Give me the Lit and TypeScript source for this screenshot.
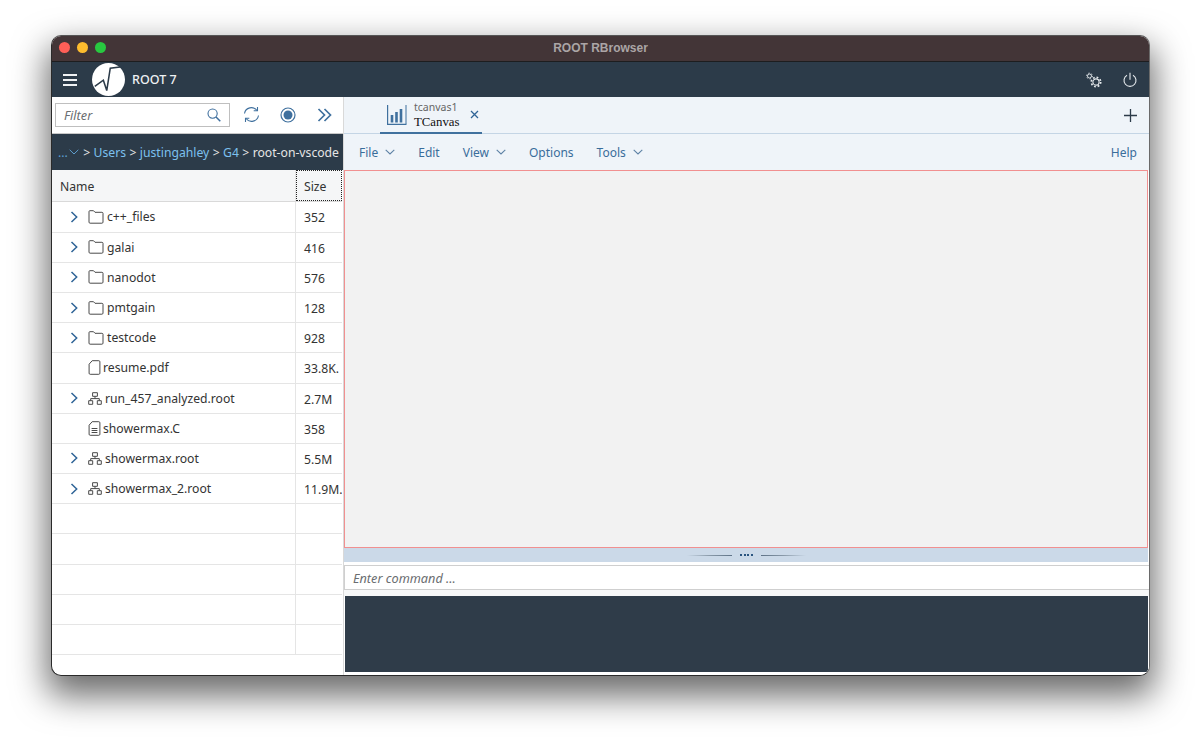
import { LitElement, html, css } from "lit";
import { customElement } from "lit/decorators.js";

const chevR = html`<svg class="chev" viewBox="0 0 10 14" width="10" height="14"><path d="M2.500 2l5.200 5-5.200 5" fill="none" stroke="#2f6497" stroke-width="1.500"/></svg>`;
const chevD = html`<svg class="chevd" viewBox="0 0 10 6" width="10" height="6"><path d="M.7.8l4.300 4.200L9.300.8" fill="none" stroke="#5f83a6" stroke-width="1.100"/></svg>`;
const folder = html`<svg class="ic" viewBox="0 0 16 14" width="16" height="14"><path d="M1 3V1.600C1 1 1.300.7 1.900.7h3.600L7 2.300h6.900c.7 0 1.100.4 1.100 1v8.800c0 .7-.4 1.100-1.100 1.100H2.100c-.7 0-1.100-.4-1.100-1.100z" fill="none" stroke="#4a4a4a" stroke-width="1"/></svg>`;
const doc = html`<svg class="ic2" viewBox="0 0 13 15" width="13" height="15"><path d="M4.200.7h6.600c.7 0 1.100.4 1.100 1.100v11.400c0 .7-.4 1.100-1.100 1.100H2.200c-.7 0-1.100-.4-1.100-1.100V4.200z" fill="none" stroke="#4a4a4a"/></svg>`;
const code = html`<svg class="ic2" viewBox="0 0 13 15" width="13" height="15"><path d="M4.200.7h6.600c.7 0 1.100.4 1.100 1.100v11.400c0 .7-.4 1.100-1.100 1.100H2.200c-.7 0-1.100-.4-1.100-1.100V4.200zM3.600 7.500h5.800M3.600 9.500h5.800M3.600 11.500h5.800" fill="none" stroke="#4a4a4a"/></svg>`;
const tree = html`<svg class="ic3" viewBox="0 0 14 13" width="14" height="13"><path d="M4.600.7h4.800v3.600H4.600zM.7 8.700h4v3.600h-4zM9.300 8.700h4v3.600h-4zM7 4.300v2.300M2.700 8.700V6.600h8.600v2.100" fill="none" stroke="#4a4a4a"/></svg>`;

type Row = { name: string; size: string; icon: unknown; exp: boolean };
const rows: Row[] = [
  { name: "c++_files", size: "352", icon: folder, exp: true },
  { name: "galai", size: "416", icon: folder, exp: true },
  { name: "nanodot", size: "576", icon: folder, exp: true },
  { name: "pmtgain", size: "128", icon: folder, exp: true },
  { name: "testcode", size: "928", icon: folder, exp: true },
  { name: "resume.pdf", size: "33.8K", icon: doc, exp: false },
  { name: "run_457_analyzed.root", size: "2.7M", icon: tree, exp: true },
  { name: "showermax.C", size: "358", icon: code, exp: false },
  { name: "showermax.root", size: "5.5M", icon: tree, exp: true },
  { name: "showermax_2.root", size: "11.9M", icon: tree, exp: true },
];

@customElement("app-root")
export class AppRoot extends LitElement {
  static styles = css`
    :host { display: block; width: 1200px; height: 743px; padding: 35px 50px 67px 51px; box-sizing: border-box; background: #fff; font-family: "Noto Sans", "Liberation Sans", sans-serif; overflow: hidden; }
    .win { height: 641px; box-sizing: border-box; border-radius: 10px; border: 1px solid #2a2a2a; border-top-color: #555; border-right-color: #6a6a6a; background: #fff; overflow: hidden; display: flex; flex-direction: column; box-shadow: 0 16px 34px 4px rgba(0,0,0,.58); }
    .title { height: 26px; box-sizing: border-box; flex: none; background: #433537; border-bottom: 1px solid #1d1d1f; display: flex; align-items: center; padding: 0 0 2px 7px; gap: 7px; position: relative; }
    .dot { width: 11px; height: 11px; border-radius: 50%; }
    .title span { position: absolute; left: 0; right: 0; text-align: center; color: #aba5a6; font: bold 12px "Liberation Sans", sans-serif; }
    .shell { height: 35px; flex: none; background: #2c3b49; display: flex; align-items: center; padding: 0 12px 0 11px; color: #fff; }
    .burger { width: 14px; height: 12px; border-top: 2px solid #f0f2f4; border-bottom: 2px solid #f0f2f4; position: relative; box-sizing: border-box; margin-right: 15px; }
    .burger::after { content: ""; position: absolute; left: 0; right: 0; top: 3px; height: 2px; background: #f0f2f4; }
    .logo { margin-right: 7px; display: block; }
    .shell b { font-weight: 500; font-size: 12.5px; color: #eef1f3; }
    .shell .sp { flex: 1; }
    .gear { margin-right: 21px; display: block; }
    .body { flex: 1; display: flex; min-height: 0; }
    .left { width: 292px; flex: none; display: flex; flex-direction: column; border-right: 1px solid #d9d9d9; box-sizing: border-box; }
    .tb { height: 37px; flex: none; display: flex; align-items: center; padding: 0 0 1px 3px; border-bottom: 1px solid #c8c8c8; box-sizing: border-box; }
    .filter { width: 175px; height: 24px; box-sizing: border-box; border: 1px solid #bfbfbf; display: flex; align-items: center; justify-content: space-between; padding: 1px 8px 0; font-style: italic; font-size: 12.7px; color: #6a6d70; background: #fff; }
    .filter svg { margin-top: -1px; }
    .tb .btn { display: block; }
    .tb .b1 { margin-left: 13px; }
    .tb .b2 { margin-left: 20px; }
    .tb .b3 { margin-left: 21px; }
    .crumb { height: 36px; flex: none; background: #2c3b49; display: flex; align-items: center; padding-left: 6px; font-size: 12.2px; color: #e5e5e5; white-space: nowrap; overflow: hidden; gap: 3.400px; }
    .crumb a { color: #7cc0ee; }
    .crumb .dots { display: flex; align-items: center; color: #5e9fd0; gap: 1px; margin-right: 1px; }
    .table { flex: 1; display: flex; flex-direction: column; }
    .row { height: 30.200px; flex: none; box-sizing: border-box; display: flex; border-bottom: 1px solid #e5e5e5; font-size: 12.2px; color: #333; width: 290px; }
    .row.head { height: 32.400px; background: #f5f6f7; border-bottom: 1px solid #d9d9d9; }
    .row.head .n { padding: 2.500px 0 0 8px; }
    .row.head .s { outline: 1px dotted #222; outline-offset: -1px; padding-top: 1px; }
    .n { width: 244px; flex: none; box-sizing: border-box; display: flex; align-items: center; padding: 0 0 0 17px; border-right: 1px solid #e5e5e5; white-space: nowrap; }
    .s { flex: 1; display: flex; align-items: center; padding: 2px 0 0 8px; overflow: hidden; white-space: nowrap; }
    .chev { margin-right: 9px; flex: none; }
    .nochev { width: 19px; flex: none; }
    .ic { margin-right: 3px; flex: none; }
    .ic2 { margin-right: 2px; flex: none; }
    .ic3 { margin-right: 3px; flex: none; }
    .right { flex: 1; min-width: 0; display: flex; flex-direction: column; background: #fff; }
    .tabs { height: 37px; flex: none; box-sizing: border-box; background: #eff4f9; border-bottom: 1px solid #c4d5e5; display: flex; align-items: stretch; padding-left: 36px; }
    .tab { width: 102px; box-sizing: border-box; border-bottom: 2px solid #40719e; display: flex; align-items: center; padding-left: 7px; margin-bottom: -1px; }
    .tab .t { margin-left: 7px; display: flex; flex-direction: column; }
    .tab .t i { font-style: normal; font-size: 10.5px; color: #666; line-height: 15px; }
    .tab .t u { text-decoration: none; font: 12.8px "Liberation Serif", serif; color: #111; line-height: 14px; }
    .tab .x { margin-left: 10px; display: block; }
    .tabs .plus { margin-left: auto; margin-right: 12px; align-self: center; display: block; }
    .menu { height: 36px; flex: none; background: #eff4f9; display: flex; align-items: center; padding: 0 12px 0 15px; font-size: 12px; color: #3a6d9b; }
    .menu span { display: flex; align-items: center; gap: 7px; margin-right: 23px; }
    .menu .h { margin: 0 0 0 auto; }
    .canvas { flex: 1; min-height: 0; box-sizing: border-box; background: #f2f2f2; border: 1px solid #f19090; margin-right: 1px; }
    .split { height: 14px; flex: none; background: #cbd9e8; display: flex; align-items: center; justify-content: center; gap: 8px; margin-right: 1px; }
    .split i { width: 45px; height: 1px; background: linear-gradient(90deg, transparent, #8a9aa9 50%, #5f7388); }
    .split i + b + i { transform: scaleX(-1); }
    .split b { width: 13px; height: 2px; background: repeating-linear-gradient(90deg, #2a5580 0 2px, transparent 2px 3.670px); }
    .cmd { height: 25px; flex: none; box-sizing: border-box; margin-top: 3px; border: 1px solid #cfcfcf; border-right: 0; display: flex; align-items: center; padding-left: 8px; font-style: italic; font-size: 12.7px; color: #6a6d70; background: #fff; }
    .gap { height: 6px; flex: none; background: #f7f8f8; }
    .console { height: 76px; flex: none; background: #2f3c49; box-sizing: border-box; margin: 0 1px; }
    .foot { height: 3px; flex: none; }
  `;

  render() {
    const empties = [0, 1, 2, 3, 4];
    return html`<div class="win">
      <div class="title">
        <div class="dot" style="background:#ff5f57"></div>
        <div class="dot" style="background:#febc2e"></div>
        <div class="dot" style="background:#28c840"></div>
        <span>ROOT RBrowser</span>
      </div>
      <div class="shell">
        <div class="burger"></div>
        <svg class="logo" width="33" height="33" viewBox="0 0 32 32"><circle cx="16" cy="16" r="16" fill="#fff"/><path d="M2.700 22.700L11 16.700l3.300 10L17.700 5 31 3.300" fill="none" stroke="#2c3b49" stroke-width="1.500"/></svg>
        <b>ROOT 7</b>
        <div class="sp"></div>
        <svg class="gear" width="16" height="16" viewBox="0 0 16 16" fill="none" stroke="#e8ecef">
          <circle cx="3.500" cy="4" r="2" stroke-width=".9"/>
          <circle cx="3.500" cy="4" r="2.900" stroke-width="1" stroke-dasharray="1.200 1.840"/>
          <circle cx="10" cy="10" r="3.100" stroke-width="1.100"/>
          <circle cx="10" cy="10" r="4.700" stroke-width="1.700" stroke-dasharray="1.800 1.890"/>
        </svg>
        <svg width="14" height="16" viewBox="0 0 14 16" fill="none" stroke="#e8ecef" stroke-width="1.100"><path d="M7 .8v7"/><path d="M4 3.200a6 6 0 1 0 6 0"/></svg>
      </div>
      <div class="body">
        <div class="left">
          <div class="tb">
            <div class="filter">Filter
              <svg width="14" height="14" viewBox="0 0 14 14" fill="none" stroke="#3f6f9e" stroke-width="1.100"><circle cx="5.600" cy="5.600" r="4.600"/><path d="M9 9l4.300 4.300" stroke-width="1.500"/></svg>
            </div>
            <svg class="btn b1" width="17" height="17" viewBox="0 0 17 17" fill="none" stroke="#3f709e" stroke-width="1.100"><path d="M1.500 7.500A7 7 0 0 1 14 4.500M15.500 9.500A7 7 0 0 1 3 12.500"/><path d="M14.500 1v3.800h-3.800M2.500 16v-3.800h3.800"/></svg>
            <svg class="btn b2" width="16" height="16" viewBox="0 0 16 16"><circle cx="8" cy="8" r="7" fill="none" stroke="#3f709e" stroke-width="1.200"/><circle cx="8" cy="8" r="4.500" fill="#3f709e"/></svg>
            <svg class="btn b3" width="15" height="14" viewBox="0 0 15 14" fill="none" stroke="#3f709e" stroke-width="1.700"><path d="M1.500 1l6 6-6 6M7.500 1l6 6-6 6"/></svg>
          </div>
          <div class="crumb">
            <span class="dots">...<svg width="10" height="6" viewBox="0 0 10 6"><path d="M.7.8l4.300 4.200L9.300.8" fill="none" stroke="#5e9fd0"/></svg></span>
            <span>&gt;</span><a>Users</a><span>&gt;</span><a>justingahley</a><span>&gt;</span><a>G4</a><span>&gt;</span><span>root-on-vscode</span>
          </div>
          <div class="table">
            <div class="row head"><div class="n">Name</div><div class="s">Size</div></div>
            ${rows.map((r) => html`<div class="row">
              <div class="n">${r.exp ? chevR : html`<div class="nochev"></div>`}${r.icon}<span>${r.name}</span></div>
              <div class="s">${r.size}${r.size.length === 5 ? "." : ""}</div>
            </div>`)}
            ${empties.map(() => html`<div class="row"><div class="n"></div><div class="s"></div></div>`)}
          </div>
        </div>
        <div class="right">
          <div class="tabs">
            <div class="tab">
              <svg width="20" height="20" viewBox="0 0 20 20" fill="none" stroke="#3f709e"><path d="M.6 0v19.400H19.500" stroke-width="1.200"/><path d="M19 0v19" stroke-width="1"/><path d="M5 10v7.500M9.500 7v10.500M14 4v13.500" stroke-width="2.600"/></svg>
              <div class="t"><i>tcanvas1</i><u>TCanvas</u></div>
              <svg class="x" width="9" height="9" viewBox="0 0 9 9" fill="none" stroke="#2f6497" stroke-width="1.300"><path d="M1 1l7 7M8 1L1 8"/></svg>
            </div>
            <svg class="plus" width="13" height="13" viewBox="0 0 13 13" fill="none" stroke="#2c3b49" stroke-width="1.300"><path d="M6.500 0v13M0 6.500h13"/></svg>
          </div>
          <div class="menu">
            <span>File ${chevD}</span><span>Edit</span><span>View ${chevD}</span><span>Options</span><span>Tools ${chevD}</span>
            <span class="h">Help</span>
          </div>
          <div class="canvas"></div>
          <div class="split"><i></i><b></b><i></i></div>
          <div class="cmd">Enter command ...</div>
          <div class="gap"></div>
          <div class="console"></div>
          <div class="foot"></div>
        </div>
      </div>
    </div>`;
  }
}
